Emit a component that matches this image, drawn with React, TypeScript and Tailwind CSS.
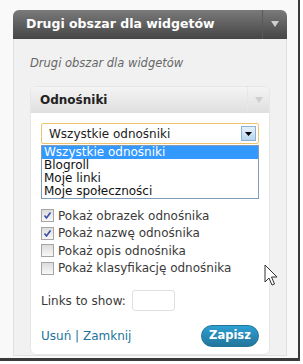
import React from "react";

const font = { fontFamily: '"DejaVu Sans", Verdana, sans-serif' };

function Check({ checked, label }: { checked?: boolean; label: string }) {
  return (
    <label className="flex items-center gap-[4px] h-[17.5px]">
      <span className="w-[13px] h-[13px] border border-[#a5a5a5] bg-gradient-to-b from-[#dcdcdc] to-[#f8f8f8] flex items-center justify-center">
        {checked && (
          <svg width="9" height="9" viewBox="0 0 9 9">
            <path d="M1.5 4.5 L3.5 7 L7.5 1.5" stroke="#3b4fa8" strokeWidth="1.6" fill="none" />
          </svg>
        )}
      </span>
      <span className="text-[12px] text-[#3a3a3a]">{label}</span>
    </label>
  );
}

export default function App() {
  return (
    <div className="w-[303px] h-[364px] bg-white relative overflow-hidden" style={font}>
      <div className="w-[300px] h-[361px] bg-[#f9f9f9] border-r-[2px] border-b-[3px] border-[#3a3a3a] pt-[10px] pl-[13px] pr-[11px]">
        <div className="w-[274px] h-[346px] flex flex-col rounded-t-[6px] overflow-hidden">
          <div className="h-[30px] bg-gradient-to-b from-[#7a7a7a] to-[#464646] flex items-center">
            <div className="flex-1 pl-[13px] text-white font-bold text-[12.5px]">Drugi obszar dla widgetów</div>
            <div className="w-[25px] h-full border-l border-[#5a5a5a] flex items-center justify-center">
              <svg width="8" height="6" viewBox="0 0 8 6"><path d="M0 0H8L4 6Z" fill="#cfcfcf" /></svg>
            </div>
          </div>
          <div className="flex-1 bg-[#f1f1f1] border-x border-b border-[#e0e0e0] px-[16px]">
            <div className="pt-[16px] pb-[14px] italic text-[11.5px] text-[#666]">Drugi obszar dla widgetów</div>
            <div className="bg-white border border-[#e6e6e6] rounded-[6px] overflow-hidden">
              <div className="h-[26px] bg-gradient-to-b from-[#f4f4f4] to-[#dfdfdf] flex items-center">
                <div className="flex-1 pl-[9px] font-bold text-[12px] text-[#222]">Odnośniki</div>
                <div className="w-[22px] h-full border-l border-[#e6e6e6] flex items-center justify-center">
                  <svg width="8" height="6" viewBox="0 0 8 6"><path d="M0 0H8L4 6Z" fill="#cfcfcf" /></svg>
                </div>
              </div>
              <div className="px-[10px] pt-[10px] pb-[7px]">
                <div className="h-[21px] border border-[#f0c36d] rounded-[2px] flex items-center pl-[7px] pr-[2px] text-[12px] text-[#222]">
                  <span className="flex-1">Wszystkie odnośniki</span>
                  <span className="w-[15px] h-[15px] border border-[#8fb0d0] bg-gradient-to-b from-[#e5f1fb] to-[#b8d6f0] flex items-center justify-center">
                    <svg width="7" height="4" viewBox="0 0 7 4"><path d="M0 0H7L3.5 4Z" fill="#000" /></svg>
                  </span>
                </div>
                <div className="mt-[1px] border border-[#7f9db9] text-[12px] leading-[13px] text-[#111]">
                  <div className="bg-[#3399ff] text-white pl-[2px]">Wszystkie odnośniki</div>
                  <div className="pl-[2px]">Blogroll</div>
                  <div className="pl-[2px]">Moje linki</div>
                  <div className="pl-[2px]">Moje społeczności</div>
                </div>
                <div className="mt-[8px] flex flex-col">
                  <Check checked label="Pokaż obrazek odnośnika" />
                  <Check checked label="Pokaż nazwę odnośnika" />
                  <Check label="Pokaż opis odnośnika" />
                  <Check label="Pokaż klasyfikację odnośnika" />
                </div>
                <div className="mt-[13px] flex items-center gap-[6px] text-[12px] text-[#3a3a3a]">
                  <span>Links to show:</span>
                  <span className="w-[43px] h-[21px] border border-[#dfdfdf] rounded-[3px] bg-white" />
                </div>
                <div className="mt-[14px] flex items-center justify-between">
                  <div className="text-[12px] text-[#21759b]">
                    Usuń <span className="text-[#21759b]">|</span> Zamknij
                  </div>
                  <button className="w-[58px] h-[22px] rounded-full bg-gradient-to-b from-[#2e9fd2] to-[#21759b] border border-[#21759b] text-white font-bold text-[11.5px]">
                    Zapisz
                  </button>
                </div>
              </div>
            </div>
          </div>
        </div>
      </div>
      <svg className="absolute left-[264px] top-[264px]" width="16" height="24" viewBox="0 0 16 24">
        <path d="M1 1 L1 18 L5 14 L8 21 L10.5 20 L7.5 13 L13 13 Z" fill="#fff" stroke="#333" strokeWidth="1" strokeLinejoin="round" />
      </svg>
    </div>
  );
}
